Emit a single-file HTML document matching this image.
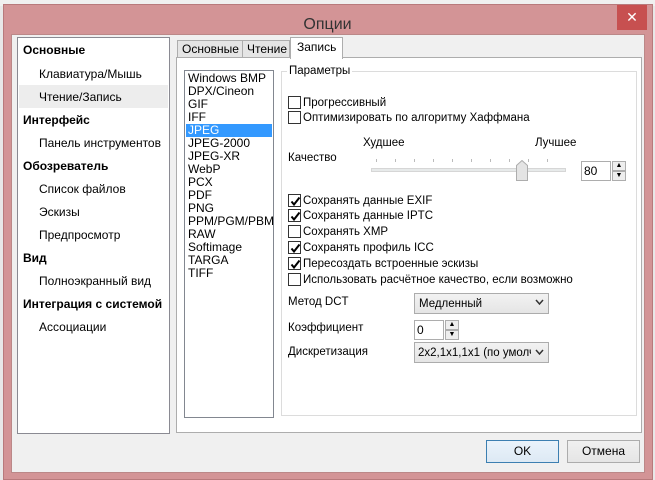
<!DOCTYPE html><html><head><meta charset="utf-8"><style>
*{box-sizing:border-box;margin:0;padding:0}
body{width:655px;height:480px;overflow:hidden;background:#e8e8e8;font-family:"Liberation Sans",sans-serif;font-size:12px;color:#000;position:relative}
.a{position:absolute;white-space:nowrap}
.t{position:absolute;white-space:nowrap;line-height:14px}
.g{font-size:11.5px}
.cb{position:absolute;width:13px;height:13px;border:1px solid #333;background:#fff}
.cb svg{position:absolute;left:1px;top:1px}
</style></head><body>
<div class="a" style="left:0;top:0;width:655px;height:6px;background:#f0f0f0"></div>
<div class="a" style="left:3px;top:4px;width:650px;height:476px;background:#d39496;border:1px solid #b87a7c"></div>
<div class="t" style="left:0;width:655px;text-align:center;top:15px;font-size:16px;line-height:20px;color:#333">Опции</div>
<div class="a" style="left:617px;top:5px;width:30px;height:25px;background:#c75050;color:#fff;text-align:center;font-size:14px;line-height:24px">✕</div>
<div class="a" style="left:11px;top:34px;width:634px;height:439px;background:#f0f0f0;border:1px solid #b88"></div>
<div class="a" style="left:17px;top:37px;width:153px;height:397px;background:#fff;border:1px solid #8a8a92"></div>
<div class="a" style="left:19px;top:85px;width:149px;height:23px;background:#ededed"></div>
<div class="t" style="left:23px;top:43px;font-weight:bold">Основные</div>
<div class="t" style="left:39px;top:67px">Клавиатура/Мышь</div>
<div class="t" style="left:39px;top:90px">Чтение/Запись</div>
<div class="t" style="left:23px;top:113px;font-weight:bold">Интерфейс</div>
<div class="t" style="left:39px;top:136px">Панель инструментов</div>
<div class="t" style="left:23px;top:159px;font-weight:bold">Обозреватель</div>
<div class="t" style="left:39px;top:182px">Список файлов</div>
<div class="t" style="left:39px;top:205px">Эскизы</div>
<div class="t" style="left:39px;top:228px">Предпросмотр</div>
<div class="t" style="left:23px;top:251px;font-weight:bold">Вид</div>
<div class="t" style="left:39px;top:274px">Полноэкранный вид</div>
<div class="t" style="left:23px;top:297px;font-weight:bold">Интеграция с системой</div>
<div class="t" style="left:39px;top:320px">Ассоциации</div>
<div class="a" style="left:176px;top:57px;width:466px;height:376px;background:#fff;border:1px solid #adadad"></div>
<div class="a" style="left:177px;top:40px;width:66px;height:18px;background:#e5e5e5;border:1px solid #adadad"></div>
<div class="t" style="left:182px;top:42px">Основные</div>
<div class="a" style="left:242px;top:40px;width:48px;height:18px;background:#e5e5e5;border:1px solid #adadad"></div>
<div class="t" style="left:247px;top:42px">Чтение</div>
<div class="a" style="left:290px;top:37px;width:53px;height:22px;background:#fff;border:1px solid #adadad;border-bottom:none"></div>
<div class="t" style="left:297px;top:40px">Запись</div>
<div class="a" style="left:184px;top:70px;width:90px;height:348px;background:#fff;border:1px solid #828790"></div>
<div class="a" style="left:186px;top:124px;width:86px;height:13px;background:#3399ff"></div>
<div class="a" style="left:188px;top:72px;line-height:13px;white-space:normal;width:85px">Windows BMP<br>DPX/Cineon<br>GIF<br>IFF<br><span style="color:#fff">JPEG</span><br>JPEG-2000<br>JPEG-XR<br>WebP<br>PCX<br>PDF<br>PNG<br>PPM/PGM/PBM<br>RAW<br>Softimage<br>TARGA<br>TIFF</div>
<div class="a" style="left:281px;top:71px;width:356px;height:345px;border:1px solid #dcdcdc"></div>
<div class="t g" style="left:287px;top:64px;background:#fff;padding:0 2px">Параметры</div>
<div class="cb" style="left:288px;top:96px"></div><div class="t g" style="left:303px;top:96px">Прогрессивный</div>
<div class="cb" style="left:288px;top:111px"></div><div class="t g" style="left:303px;top:111px">Оптимизировать по алгоритму Хаффмана</div>
<div class="t g" style="left:363px;top:136px">Худшее</div>
<div class="t g" style="left:535px;top:136px">Лучшее</div>
<div class="t g" style="left:288px;top:151px">Качество</div>
<div class="a" style="left:371px;top:168px;width:195px;height:4px;background:#e7eaea;border:1px solid #d6d6d6"></div>
<div class="a" style="left:376px;top:159px;width:190px;height:3px;background:repeating-linear-gradient(90deg,#bbb 0 1px,transparent 1px 19px)"></div>
<svg class="a" style="left:516px;top:160px" width="12" height="21"><path d="M0.5 20.5V5.5L6 0.5L11.5 5.5V20.5Z" fill="#e4e4e4" stroke="#adadad"/></svg>
<div class="a" style="left:581px;top:161px;width:30px;height:20px;border:1px solid #adadad;background:#fff"></div>
<div class="t" style="left:584px;top:164px">80</div>
<div class="a" style="left:612px;top:161px;width:14px;height:10px;border:1px solid #adadad;background:#eee;font-size:7px;text-align:center;line-height:8px">▲</div>
<div class="a" style="left:612px;top:171px;width:14px;height:10px;border:1px solid #adadad;background:#eee;font-size:7px;text-align:center;line-height:8px">▼</div>
<div class="cb" style="left:288px;top:194px"><svg width="11" height="11"><path d="M1.5 5.5L4 8.5L9.5 1.5" fill="none" stroke="#000" stroke-width="2"/></svg></div><div class="t g" style="left:303px;top:194px">Сохранять данные EXIF</div>
<div class="cb" style="left:288px;top:209px"><svg width="11" height="11"><path d="M1.5 5.5L4 8.5L9.5 1.5" fill="none" stroke="#000" stroke-width="2"/></svg></div><div class="t g" style="left:303px;top:209px">Сохранять данные IPTC</div>
<div class="cb" style="left:288px;top:225px"></div><div class="t g" style="left:303px;top:225px">Сохранять XMP</div>
<div class="cb" style="left:288px;top:241px"><svg width="11" height="11"><path d="M1.5 5.5L4 8.5L9.5 1.5" fill="none" stroke="#000" stroke-width="2"/></svg></div><div class="t g" style="left:303px;top:241px">Сохранять профиль ICC</div>
<div class="cb" style="left:288px;top:257px"><svg width="11" height="11"><path d="M1.5 5.5L4 8.5L9.5 1.5" fill="none" stroke="#000" stroke-width="2"/></svg></div><div class="t g" style="left:303px;top:257px">Пересоздать встроенные эскизы</div>
<div class="cb" style="left:288px;top:273px"></div><div class="t g" style="left:303px;top:273px">Использовать расчётное качество, если возможно</div>
<div class="t g" style="left:288px;top:295px">Метод DCT</div>
<div class="a" style="left:414px;top:293px;width:135px;height:21px;border:1px solid #acacac;background:linear-gradient(#f2f2f2,#e5e5e5)"></div>
<div class="t g" style="left:419px;top:297px">Медленный</div>
<svg class="a" style="left:535px;top:299px" width="9" height="7"><path d="M1 1L4.5 5L8 1" fill="none" stroke="#333" stroke-width="1.5"/></svg>
<div class="t g" style="left:288px;top:321px">Коэффициент</div>
<div class="a" style="left:414px;top:320px;width:30px;height:20px;border:1px solid #adadad;background:#fff"></div>
<div class="t" style="left:417px;top:323px">0</div>
<div class="a" style="left:445px;top:320px;width:14px;height:10px;border:1px solid #adadad;background:#eee;font-size:7px;text-align:center;line-height:8px">▲</div>
<div class="a" style="left:445px;top:330px;width:14px;height:10px;border:1px solid #adadad;background:#eee;font-size:7px;text-align:center;line-height:8px">▼</div>
<div class="t g" style="left:288px;top:345px">Дискретизация</div>
<div class="a" style="left:414px;top:342px;width:135px;height:21px;border:1px solid #acacac;background:linear-gradient(#f2f2f2,#e5e5e5);overflow:hidden"></div>
<div class="t g" style="left:418px;top:346px;width:113px;overflow:hidden">2x2,1x1,1x1 (по умолчанию)</div>
<svg class="a" style="left:535px;top:349px" width="9" height="7"><path d="M1 1L4.5 5L8 1" fill="none" stroke="#333" stroke-width="1.5"/></svg>
<div class="a" style="left:486px;top:440px;width:73px;height:23px;border:1px solid #3c7fb1;background:linear-gradient(#eaf3fb,#dde9f4);text-align:center;line-height:21px">OK</div>
<div class="a" style="left:567px;top:440px;width:73px;height:23px;border:1px solid #acacac;background:linear-gradient(#f0f0f0,#e5e5e5);text-align:center;line-height:21px">Отмена</div>
</body></html>
